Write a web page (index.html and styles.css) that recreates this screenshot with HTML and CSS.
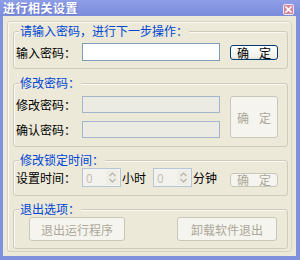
FILE: index.html
```html
<!DOCTYPE html>
<html lang="zh-CN">
<head>
    <meta charset="UTF-8">
    <title>进行相关设置</title>
    <link rel="stylesheet" href="styles.css">
</head>
<body>
    <div class="window">
        <!-- Judul jendela -->
        <div class="titlebar">
            <span class="title">进行相关设置</span>
            <span class="close">
                <svg width="7" height="7" viewBox="0 0 7 7"><path d="M0.5 0.5L6.5 6.5M6.5 0.5L0.5 6.5" stroke="#fff" stroke-width="1.6"/></svg>
            </span>
        </div>
        <div class="client">
            <div class="frame">
                <!-- Masukkan sandi -->
                <div class="group g1">
                    <div class="legend">请输入密码，进行下一步操作：</div>
                    <div class="row">
                        <label class="lbl">输入密码：</label>
                        <input class="field" type="password">
                        <button class="btn btn-ok"><span>确</span><span>定</span></button>
                    </div>
                </div>
                <!-- Ubah sandi -->
                <div class="group g2">
                    <div class="legend">修改密码：</div>
                    <div class="row2">
                        <div class="col">
                            <div class="row">
                                <label class="lbl">修改密码：</label>
                                <input class="field off" type="password" disabled>
                            </div>
                            <div class="row">
                                <label class="lbl">确认密码：</label>
                                <input class="field off" type="password" disabled>
                            </div>
                        </div>
                        <button class="btn off big" disabled><span>确</span><span>定</span></button>
                    </div>
                </div>
                <!-- Waktu kunci -->
                <div class="group g3">
                    <div class="legend">修改锁定时间：</div>
                    <div class="row">
                        <label class="lbl">设置时间：</label>
                        <div class="spin">
                            <span class="num">0</span>
                            <span class="arrows">
                                <svg width="9" height="13" viewBox="0 0 9 13"><path d="M1.5 5L4.5 2L7.5 5M1.5 8L4.5 11L7.5 8" fill="none" stroke="#b5b3a6" stroke-width="1.2"/></svg>
                            </span>
                        </div>
                        <span class="unit">小时</span>
                        <div class="spin">
                            <span class="num">0</span>
                            <span class="arrows">
                                <svg width="9" height="13" viewBox="0 0 9 13"><path d="M1.5 5L4.5 2L7.5 5M1.5 8L4.5 11L7.5 8" fill="none" stroke="#b5b3a6" stroke-width="1.2"/></svg>
                            </span>
                        </div>
                        <span class="unit">分钟</span>
                        <button class="btn off small" disabled><span>确</span><span>定</span></button>
                    </div>
                </div>
                <!-- Keluar -->
                <div class="group g4">
                    <div class="legend">退出选项：</div>
                    <div class="row exits">
                        <button class="btn off wide1" disabled>退出运行程序</button>
                        <button class="btn off wide2" disabled>卸载软件退出</button>
                    </div>
                </div>
            </div>
        </div>
    </div>
</body>
</html>
```

FILE: styles.css
```css
body {
    margin: 0;
    font-family: "Noto Sans CJK TC", "Noto Sans CJK SC", sans-serif;
    font-size: 12px;
}
.window {
    width: 300px;
    height: 260px;
    box-sizing: border-box;
    padding: 0 4px 4px 3px;
    background: #7f90dc;
    display: flex;
    flex-direction: column;
}
.titlebar {
    height: 16px;
    display: flex;
    align-items: center;
    justify-content: space-between;
    background: linear-gradient(#8d9de6, #7b8cdb);
    margin: 0 -4px 0 -3px;
    padding: 0 6px 0 3px;
}
.title {
    color: #fff;
    font-weight: bold;
    font-size: 12px;
    line-height: 16px;
    letter-spacing: 0.5px;
    text-shadow: 1px 1px 0 #6a7bc8;
}
.close {
    width: 11px;
    height: 11px;
    box-sizing: border-box;
    border: 1px solid #f4e6ee;
    border-radius: 2px;
    background: #d4849e;
    display: flex;
    align-items: center;
    justify-content: center;
    margin-top: 3px;
}
.client {
    flex: 1;
    background: #ece9d8;
    padding: 5px 4px 4px 4px;
}
.frame {
    height: 231px;
    box-sizing: border-box;
    border: 1px solid #d6d3c4;
    border-radius: 3px;
    box-shadow: inset 1px 1px 0 #fbfaf6;
    padding: 9px 3px 2px 5px;
    display: flex;
    flex-direction: column;
}
.group {
    border: 1px solid #cdccbb;
    border-radius: 3px;
    box-sizing: border-box;
    box-shadow: inset 1px 1px 0 #faf9f4;
}
.g1 { height: 38px; }
.g2 { height: 64px; margin-top: 14px; }
.g3 { height: 36px; margin-top: 13px; }
.g4 { height: 40px; margin-top: 13px; }
.legend {
    width: fit-content;
    margin: -8px 0 0 5px;
    padding: 0 1px;
    background: #ece9d8;
    color: #0046d5;
    line-height: 14px;
}
.row {
    display: flex;
    align-items: center;
    padding-left: 2px;
}
.g1 .row { margin-top: 5px; }
.lbl {
    width: 66px;
    color: #000;
    line-height: 17px;
}
.field {
    width: 138px;
    height: 18px;
    box-sizing: border-box;
    border: 1px solid #7f9db9;
    background: #fff;
    margin: 0;
    padding: 0 2px;
}
.field.off {
    height: 17px;
    border-color: #a2b5cb;
    background: #ecebe3;
}
.btn {
    margin: 0 0 0 10px;
    padding: 0 6px;
    width: 48px;
    height: 15px;
    box-sizing: border-box;
    border: 1px solid #003c74;
    border-radius: 3px;
    background: linear-gradient(#fff, #f1f0ea 80%, #e3e2da);
    font-family: inherit;
    font-size: 12px;
    line-height: 13px;
    color: #000;
    display: flex;
    align-items: center;
    justify-content: space-between;
}
.btn.off {
    border-color: #c9c7ba;
    background: #f5f4ee;
    color: #aca899;
}
.row2 {
    display: flex;
    margin-top: 6px;
}
.col {
    display: flex;
    flex-direction: column;
    gap: 8px;
}
.btn.big {
    height: 42px;
}
.g3 .row { margin-top: 1px; }
.spin {
    width: 39px;
    height: 19px;
    box-sizing: border-box;
    border: 1px solid #b6c6d8;
    background: #f3f2ec;
    display: flex;
    align-items: center;
    justify-content: space-between;
    padding: 0 1px 0 3px;
}
.num {
    color: #c5c3b8;
    line-height: 15px;
}
.arrows {
    width: 13px;
    height: 15px;
    border-radius: 2px;
    background: #eeede6;
    display: flex;
    align-items: center;
    justify-content: center;
}
.unit {
    width: 24px;
    margin-left: 1px;
    color: #000;
}
.unit + .spin { margin-left: 7px; }
.btn.small {
    height: 14px;
    margin-left: 13px;
    margin-top: 4px;
}
.exits {
    margin-top: 1px;
    padding-left: 15px;
}
.btn.wide1,
.btn.wide2 {
    height: 24px;
    justify-content: center;
    margin: 0;
}
.btn.wide1 { width: 96px; }
.btn.wide2 { width: 100px; margin-left: 52px; }
```
